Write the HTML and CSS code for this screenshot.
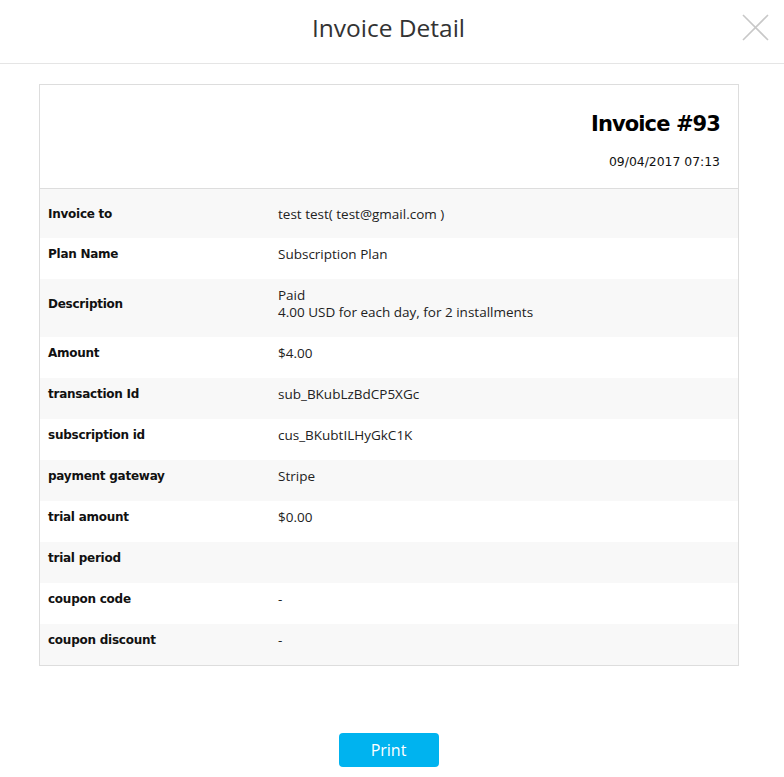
FILE: index.html
```html
<!DOCTYPE html>
<html>
<head>
<meta charset="utf-8">
<link rel="stylesheet" href="styles.css">
</head>
<body>
<div class="modal">
  <div class="modal-header">
    <h1 class="modal-title">Invoice Detail</h1>
    <button class="close" aria-label="Close">
      <svg width="27" height="27" viewBox="0 0 27 27"><path d="M1 1L26 26M26 1L1 26" stroke="#c8c8c8" stroke-width="1.6" fill="none"/></svg>
    </button>
  </div>
  <div class="modal-body">
    <div class="invoice">
      <div class="invoice-head">
        <div class="invoice-no">Invoice #93</div>
        <div class="invoice-date">09/04/2017 07:13</div>
      </div>
      <table class="details">
        <tr class="first"><th>Invoice to</th><td>test test( test@gmail.com )</td></tr>
        <tr><th>Plan Name</th><td>Subscription Plan</td></tr>
        <tr class="desc"><th>Description</th><td>Paid<br>4.00 USD for each day, for 2 installments</td></tr>
        <tr><th>Amount</th><td>$4.00</td></tr>
        <tr><th>transaction Id</th><td>sub_BKubLzBdCP5XGc</td></tr>
        <tr><th>subscription id</th><td>cus_BKubtILHyGkC1K</td></tr>
        <tr><th>payment gateway</th><td>Stripe</td></tr>
        <tr><th>trial amount</th><td>$0.00</td></tr>
        <tr><th>trial period</th><td></td></tr>
        <tr><th>coupon code</th><td>-</td></tr>
        <tr><th>coupon discount</th><td>-</td></tr>
      </table>
    </div>
  </div>
  <div class="modal-footer">
    <button class="print">Print</button>
  </div>
</div>
</body>
</html>
```
FILE: styles.css
```css
html, body {
  margin: 0;
  padding: 0;
  background: #fff;
}
body {
  font-family: "Open Sans", "Noto Sans", sans-serif;
  color: #222;
}
.modal {
  width: 777px;
}
.modal-header {
  position: relative;
  height: 64px;
  border-bottom: 1px solid #e5e5e5;
  display: flex;
  align-items: center;
  justify-content: center;
  width: 784px;
  box-sizing: border-box;
  padding-right: 7px;
}
.modal-title {
  margin: 0;
  font-size: 24.5px;
  font-weight: 400;
  color: #333;
  line-height: 1;
  padding-bottom: 6px;
}
.close {
  position: absolute;
  right: 15px;
  top: 14px;
  border: 0;
  background: none;
  padding: 0;
  width: 27px;
  height: 27px;
  cursor: pointer;
}
.close svg {
  display: block;
}
.modal-body {
  padding: 20px 38px 0 39px;
}
.invoice {
  border: 1px solid #ddd;
}
.invoice-head {
  height: 104px;
  border-bottom: 1px solid #ddd;
  text-align: right;
  padding: 0 18px 0 0;
  box-sizing: border-box;
}
.invoice-no {
  font-family: "DejaVu Sans", Verdana, sans-serif;
  font-weight: 700;
  font-size: 21px;
  letter-spacing: -0.9px;
  color: #000;
  padding-top: 25px;
  line-height: 28px;
}
.invoice-date {
  font-family: "DejaVu Sans", Verdana, sans-serif;
  font-size: 12.4px;
  color: #111;
  margin-top: 16px;
  line-height: 16px;
}
.details {
  width: 100%;
  border-collapse: collapse;
}
.details tr:nth-child(odd) {
  background: #f8f8f8;
}
.details th,
.details td {
  padding: 8px 8px 16px;
  line-height: 17px;
}
.details tr.first th,
.details tr.first td {
  padding-top: 17px;
  padding-bottom: 15px;
}
.details th {
  width: 214px;
  text-align: left;
  vertical-align: middle;
  font-family: "DejaVu Sans", Verdana, sans-serif;
  font-weight: 700;
  font-size: 12px;
  letter-spacing: -0.25px;
  color: #111;
}
.details td {
  vertical-align: top;
  font-size: 13.5px;
  color: #222;
}
.modal-footer {
  display: flex;
  justify-content: center;
  padding-top: 67px;
}
.print {
  width: 100px;
  height: 34px;
  border: 0;
  border-radius: 4px;
  background: #00b3ef;
  color: #fff;
  font-family: "Open Sans", sans-serif;
  font-size: 16px;
  cursor: pointer;
  padding: 0;
}
```
